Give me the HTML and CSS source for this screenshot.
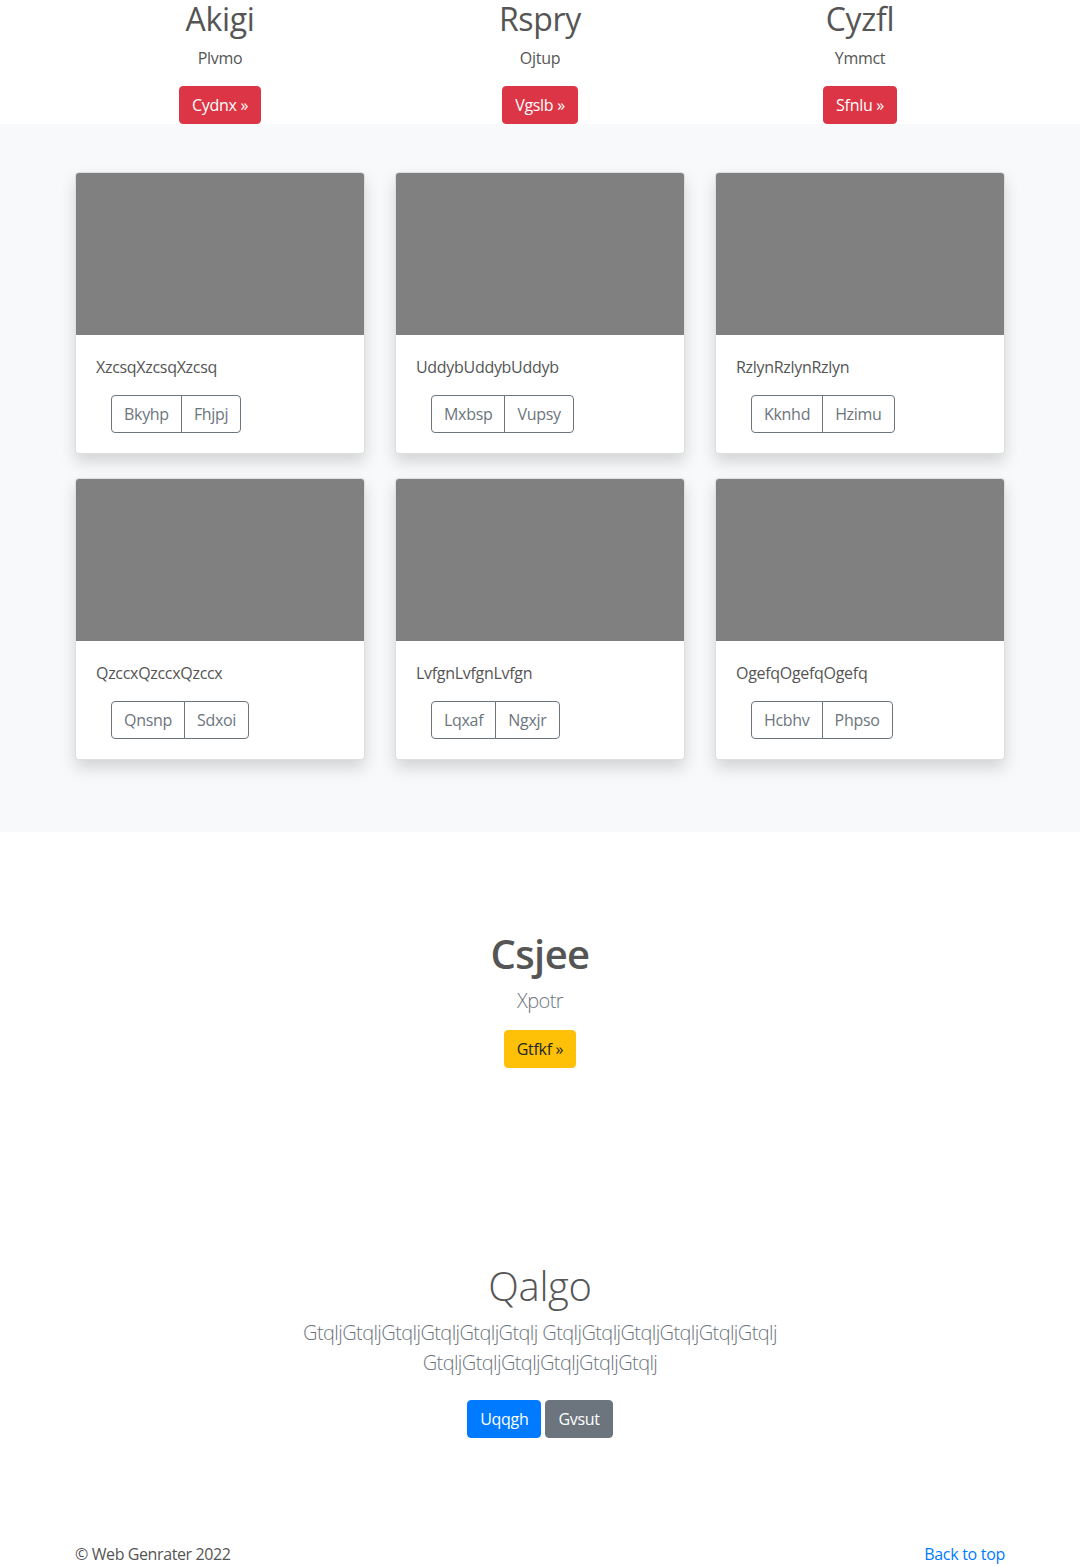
FILE: index.html
```html
<!DOCTYPE html>
<html lang="en">
<head>
<meta charset="utf-8">
<title>Album</title>
<link rel="stylesheet" href="styles.css">
</head>
<body>
<div class="features">
  <div class="feature">
    <h2 class="feature-title">Akigi</h2>
    <p class="feature-text">Plvmo</p>
    <a class="btn btn-danger" href="#">Cydnx &raquo;</a>
  </div>
  <div class="feature">
    <h2 class="feature-title">Rspry</h2>
    <p class="feature-text">Ojtup</p>
    <a class="btn btn-danger" href="#">Vgslb &raquo;</a>
  </div>
  <div class="feature">
    <h2 class="feature-title">Cyzfl</h2>
    <p class="feature-text">Ymmct</p>
    <a class="btn btn-danger" href="#">Sfnlu &raquo;</a>
  </div>
</div>

<section class="album">
  <div class="container">
    <div class="card-grid">
      <div class="card">
        <div class="card-img"></div>
        <div class="card-body">
          <p class="card-text">XzcsqXzcsqXzcsq</p>
          <div class="btn-group"><button class="btn btn-outline">Bkyhp</button><button class="btn btn-outline">Fhjpj</button></div>
        </div>
      </div>
      <div class="card">
        <div class="card-img"></div>
        <div class="card-body">
          <p class="card-text">UddybUddybUddyb</p>
          <div class="btn-group"><button class="btn btn-outline">Mxbsp</button><button class="btn btn-outline">Vupsy</button></div>
        </div>
      </div>
      <div class="card">
        <div class="card-img"></div>
        <div class="card-body">
          <p class="card-text">RzlynRzlynRzlyn</p>
          <div class="btn-group"><button class="btn btn-outline">Kknhd</button><button class="btn btn-outline">Hzimu</button></div>
        </div>
      </div>
      <div class="card">
        <div class="card-img"></div>
        <div class="card-body">
          <p class="card-text">QzccxQzccxQzccx</p>
          <div class="btn-group"><button class="btn btn-outline">Qnsnp</button><button class="btn btn-outline">Sdxoi</button></div>
        </div>
      </div>
      <div class="card">
        <div class="card-img"></div>
        <div class="card-body">
          <p class="card-text">LvfgnLvfgnLvfgn</p>
          <div class="btn-group"><button class="btn btn-outline">Lqxaf</button><button class="btn btn-outline">Ngxjr</button></div>
        </div>
      </div>
      <div class="card">
        <div class="card-img"></div>
        <div class="card-body">
          <p class="card-text">OgefqOgefqOgefq</p>
          <div class="btn-group"><button class="btn btn-outline">Hcbhv</button><button class="btn btn-outline">Phpso</button></div>
        </div>
      </div>
    </div>
  </div>
</section>

<section class="cta">
  <h1 class="cta-title">Csjee</h1>
  <p class="lead muted">Xpotr</p>
  <a class="btn btn-warning" href="#">Gtfkf &raquo;</a>
</section>

<section class="hero">
  <h1 class="hero-title">Qalgo</h1>
  <p class="lead muted hero-lead">GtqljGtqljGtqljGtqljGtqljGtqlj GtqljGtqljGtqljGtqljGtqljGtqlj GtqljGtqljGtqljGtqljGtqljGtqlj</p>
  <div class="hero-actions">
    <a class="btn btn-primary" href="#">Uqqgh</a>
    <a class="btn btn-secondary" href="#">Gvsut</a>
  </div>
</section>

<footer class="footer">
  <div class="container footer-inner">
    <p class="copy">&copy; Web Genrater 2022</p>
    <a class="back" href="#">Back to top</a>
  </div>
</footer>
</body>
</html>
```

FILE: styles.css
```css
* { box-sizing: border-box; }

html, body {
  margin: 0;
  padding: 0;
}

body {
  font-family: "Open Sans", "Noto Sans", "Liberation Sans", sans-serif;
  font-size: 16px;
  line-height: 1.5;
  letter-spacing: -0.3px;
  color: #555;
  background: #fff;
}

h1, h2, p { margin: 0; }

.container {
  max-width: 960px;
  margin: 0 auto;
  padding: 0 15px;
}

/* Buttons */
.btn {
  display: inline-block;
  font-family: inherit;
  font-size: 16px;
  line-height: 24px;
  letter-spacing: -0.3px;
  padding: 6px 12px;
  border: 1px solid transparent;
  border-radius: 4px;
  text-decoration: none;
  cursor: pointer;
  background: transparent;
}

.btn-danger { background: #dc3545; border-color: #dc3545; color: #fff; }
.btn-warning { background: #ffc107; border-color: #ffc107; color: #212529; }
.btn-primary { background: #007bff; border-color: #007bff; color: #fff; }
.btn-secondary { background: #6c757d; border-color: #6c757d; color: #fff; }

.btn-outline {
  color: #6c757d;
  border-color: #6c757d;
}

.btn-group {
  display: inline-flex;
  margin-left: 15px;
}
.btn-group .btn:first-child {
  border-top-right-radius: 0;
  border-bottom-right-radius: 0;
}
.btn-group .btn + .btn {
  margin-left: -1px;
  border-top-left-radius: 0;
  border-bottom-left-radius: 0;
}

/* Features */
.features {
  max-width: 960px;
  margin: 0 auto;
  display: grid;
  grid-template-columns: repeat(3, 1fr);
  text-align: center;
}

.feature-title {
  font-size: 32px;
  line-height: 1.2;
  font-weight: 500;
  letter-spacing: -0.3px;
  margin-bottom: 8px;
}

.feature-text {
  margin-bottom: 16px;
}

.feature .btn { vertical-align: top; }

/* Album */
.album {
  background: #f8f9fa;
  padding: 48px 0;
}

.card-grid {
  display: grid;
  grid-template-columns: repeat(3, 1fr);
  column-gap: 30px;
  row-gap: 24px;
  padding-bottom: 24px;
}

.card {
  background: #fff;
  border: 1px solid rgba(0, 0, 0, 0.125);
  border-radius: 4px;
  box-shadow: 0 8px 16px rgba(0, 0, 0, 0.15);
  overflow: hidden;
}

.card-img {
  height: 162px;
  background: #808080;
}

.card-body {
  padding: 20px;
}

.card-text {
  margin-bottom: 16px;
}

/* CTA */
.cta {
  text-align: center;
  padding: 98px 0 97px;
}

.cta-title {
  font-size: 40px;
  line-height: 1.2;
  font-weight: 600;
  letter-spacing: -0.6px;
  margin-bottom: 8px;
}

.lead {
  font-size: 20px;
  line-height: 1.5;
  font-weight: 300;
  letter-spacing: -0.6px;
}

.muted { color: #6c757d; }

.cta .lead { margin-bottom: 14px; }

/* Hero */
.hero {
  text-align: center;
  padding: 97px 15px 48px;
}

.hero-title {
  font-size: 40px;
  line-height: 1.2;
  font-weight: 300;
  margin-bottom: 8px;
}

.hero-lead {
  max-width: 610px;
  margin: 0 auto 22px;
}

.hero-actions {
  display: flex;
  justify-content: center;
  gap: 4px;
}

/* Footer */
.footer {
  padding: 56px 0 48px;
}

.footer-inner {
  display: flex;
  justify-content: space-between;
  align-items: center;
}

.copy {
  letter-spacing: -0.4px;
}

.back {
  color: #007bff;
  text-decoration: none;
}
```
